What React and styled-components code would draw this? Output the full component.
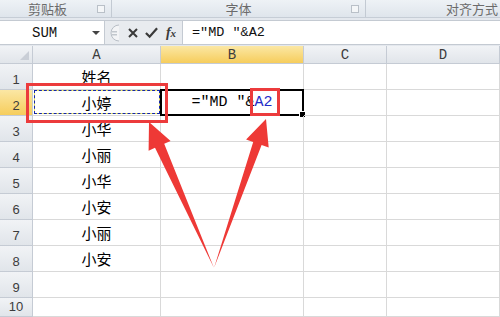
import React from 'react';
import styled, {createGlobalStyle} from 'styled-components';

const GlobalStyle = createGlobalStyle`
    html, body {
        margin: 0;
        padding: 0;
        background: #ffffff;
    }
`;

const Page = styled.div`
    position: relative;
    width: 500px;
    height: 317px;
    overflow: hidden;
    background: #e4e8ee;
    font-family: "Noto Sans CJK SC", "Noto Sans", sans-serif;
`;

const Ribbon = styled.div`
    display: flex;
    height: 17px;
    background: linear-gradient(#eef2f6, #dfe5ec);
    border-bottom: 1px solid #c6cdd6;
`;

const Group = styled.div`
    position: relative;
    display: flex;
    align-items: center;
    justify-content: ${p => p.align || 'center'};
    width: ${p => p.w}px;
    flex: ${p => p.w ? 'none' : 1};
    padding: ${p => p.pad || '0'};
    box-sizing: border-box;
    border-right: ${p => p.last ? 'none' : '1px solid #c3cad3'};
    font-size: 13px;
    color: #6b6b6b;
    line-height: 17px;
`;

const Launcher = styled.span`
    position: absolute;
    right: 6px;
    top: 5px;
    width: 6px;
    height: 6px;
    border: 1px solid #b9c0c8;
    background: #f4f6f8;
`;

const FormulaBar = styled.div`
    display: flex;
    height: 23px;
    margin-top: 2px;
    border-top: 1px solid #c4cad2;
    border-bottom: 1px solid #c4cad2;
    background: #e8ebef;
`;

const NameBox = styled.div`
    display: flex;
    align-items: center;
    justify-content: space-between;
    width: 105px;
    padding: 0 4px 0 32px;
    box-sizing: border-box;
    background: #ffffff;
    border-right: 1px solid #c4cad2;
    font-family: "Liberation Mono", monospace;
    font-size: 14px;
    color: #111;
`;

const Arrow = styled.span`
    width: 0;
    height: 0;
    border-left: 4px solid transparent;
    border-right: 4px solid transparent;
    border-top: 4px solid #444;
`;

const Tools = styled.div`
    display: flex;
    align-items: center;
    gap: 6px;
    width: 78px;
    padding-left: 1px;
    box-sizing: border-box;
    border-right: 1px solid #c4cad2;
`;

const ToolIcon = styled.span`
    display: flex;
    align-items: center;
    justify-content: center;
    width: ${p => p.w || 13}px;
    font-family: ${p => p.serif ? '"Liberation Serif", serif' : 'inherit'};
    font-style: ${p => p.serif ? 'italic' : 'normal'};
    font-weight: bold;
    font-size: 14px;
    color: #3a3a3a;
`;

const FormulaInput = styled.div`
    flex: 1;
    display: flex;
    align-items: center;
    padding-left: 9px;
    background: #ffffff;
    font-family: "Liberation Mono", monospace;
    font-size: 13.5px;
    color: #111;
`;

const Sheet = styled.div`
    display: grid;
    grid-template-columns: 33px 128px 143px 83px 1fr;
    grid-template-rows: 18px repeat(9, 26px) 19px;
    margin-top: 1px;
    background: #ffffff;
`;

const Header = styled.div`
    display: flex;
    align-items: ${p => p.row ? 'flex-end' : 'center'};
    justify-content: center;
    box-sizing: border-box;
    border-right: 1px solid #c5cbd4;
    border-bottom: 1px solid #c5cbd4;
    background: ${p => p.active
        ? 'linear-gradient(#fbe7a4, #f6cd5c)'
        : 'linear-gradient(#f1f3f6, #e1e5ea)'};
    font-family: ${p => p.row ? '"Liberation Sans", sans-serif' : '"Liberation Mono", monospace'};
    font-size: ${p => p.row ? 13 : 14}px;
    color: #3c3c3c;
    padding-bottom: ${p => p.row ? 2 : 0}px;
`;

const Corner = styled(Header)`
    justify-content: flex-end;
    align-items: flex-end;
    padding: 0 3px 3px 0;
`;

const Triangle = styled.span`
    width: 0;
    height: 0;
    border-left: 9px solid transparent;
    border-bottom: 9px solid #c9ced6;
`;

const Cell = styled.div`
    position: relative;
    display: flex;
    align-items: center;
    justify-content: center;
    box-sizing: border-box;
    border-right: 1px solid #d9d9d9;
    border-bottom: 1px solid #d9d9d9;
    font-size: 15px;
    font-family: ${p => p.mono ? '"Liberation Mono", monospace' : '"Noto Sans CJK SC", sans-serif'};
    color: #000;

    ${p => p.copied && `
        &::before {
            content: "";
            position: absolute;
            inset: 0 0 1px 1px;
            border: 1px solid #f1ec5c;
        }
        &::after {
            content: "";
            position: absolute;
            inset: 0 0 1px 1px;
            border: 1px dashed #1626a8;
        }
    `}

    ${p => p.selected && `
        &::before {
            content: "";
            position: absolute;
            inset: -1px;
            border: 2px solid #000;
        }
        &::after {
            content: "";
            position: absolute;
            right: -3px;
            bottom: -3px;
            width: 5px;
            height: 5px;
            background: #000;
            border: 1px solid #fff;
        }
    `}
`;

const Ref = styled.span`
    color: #1f2bc8;
`;

const Mark = styled.div`
    position: absolute;
    left: ${p => p.x}px;
    top: ${p => p.y}px;
    width: ${p => p.w}px;
    height: ${p => p.h}px;
    box-sizing: border-box;
    border: 3px solid #ec3b3c;
    pointer-events: none;
`;

const Overlay = styled.svg`
    position: absolute;
    left: 0;
    top: 0;
    pointer-events: none;
`;

const names = ['姓名', '小婷', '小华', '小丽', '小华', '小安', '小丽', '小安', '', ''];

export default function App() {
    return (
        <Page>
            <GlobalStyle/>
            <Ribbon>
                <Group w={112} align="flex-start" pad="0 0 0 28px">
                    剪贴板<Launcher/>
                </Group>
                <Group w={254}>
                    字体<Launcher/>
                </Group>
                <Group align="flex-end" pad="0 2px 0 0" last>
                    对齐方式
                </Group>
            </Ribbon>

            <FormulaBar>
                <NameBox>SUM<Arrow/></NameBox>
                <Tools>
                    <svg width="14" height="18" viewBox="0 0 14 18">
                        <path d="M13 1 A8 8 0 0 0 13 17" fill="#f3f4f6" stroke="#b8bec6"/>
                        <rect x="6" y="7" width="5" height="1.5" fill="#c2c7cd"/>
                        <rect x="6" y="10" width="5" height="1.5" fill="#c2c7cd"/>
                    </svg>
                    <ToolIcon>
                        <svg width="12" height="12" viewBox="0 0 12 12">
                            <path d="M2 2 L10 10 M10 2 L2 10" stroke="#3a3a3a" strokeWidth="2"/>
                        </svg>
                    </ToolIcon>
                    <ToolIcon>
                        <svg width="14" height="12" viewBox="0 0 14 12">
                            <path d="M1 6 L5 10 L13 1" stroke="#3a3a3a" strokeWidth="2.4" fill="none"/>
                        </svg>
                    </ToolIcon>
                    <ToolIcon serif w={14}>f<span style={{fontSize: 11}}>x</span></ToolIcon>
                </Tools>
                <FormulaInput>=″MD ″&amp;A2</FormulaInput>
            </FormulaBar>

            <Sheet>
                <Corner><Triangle/></Corner>
                <Header>A</Header>
                <Header active>B</Header>
                <Header>C</Header>
                <Header>D</Header>
                {names.map((n, i) => (
                    <React.Fragment key={i}>
                        <Header row active={i === 1}>{i + 1}</Header>
                        <Cell copied={i === 1}>{n}</Cell>
                        <Cell mono selected={i === 1}>
                            {i === 1 && <>=″MD ″&amp;<Ref>A2</Ref></>}
                        </Cell>
                        <Cell/>
                        <Cell/>
                    </React.Fragment>
                ))}
            </Sheet>

            <Mark x={26} y={83} w={142} h={40}/>
            <Mark x={250} y={88} w={30} h={28}/>

            <Overlay width="500" height="317">
                <polygon
                    fill="#ee3936"
                    points="149,122 170.6,140.9 164.2,143.8 214,268 155,147.8 148.6,150.7"
                />
                <polygon
                    fill="#ee3936"
                    points="266,119 268.7,147.4 261.6,145 214,268 253.2,142 246.1,139.6"
                />
            </Overlay>
        </Page>
    );
}
